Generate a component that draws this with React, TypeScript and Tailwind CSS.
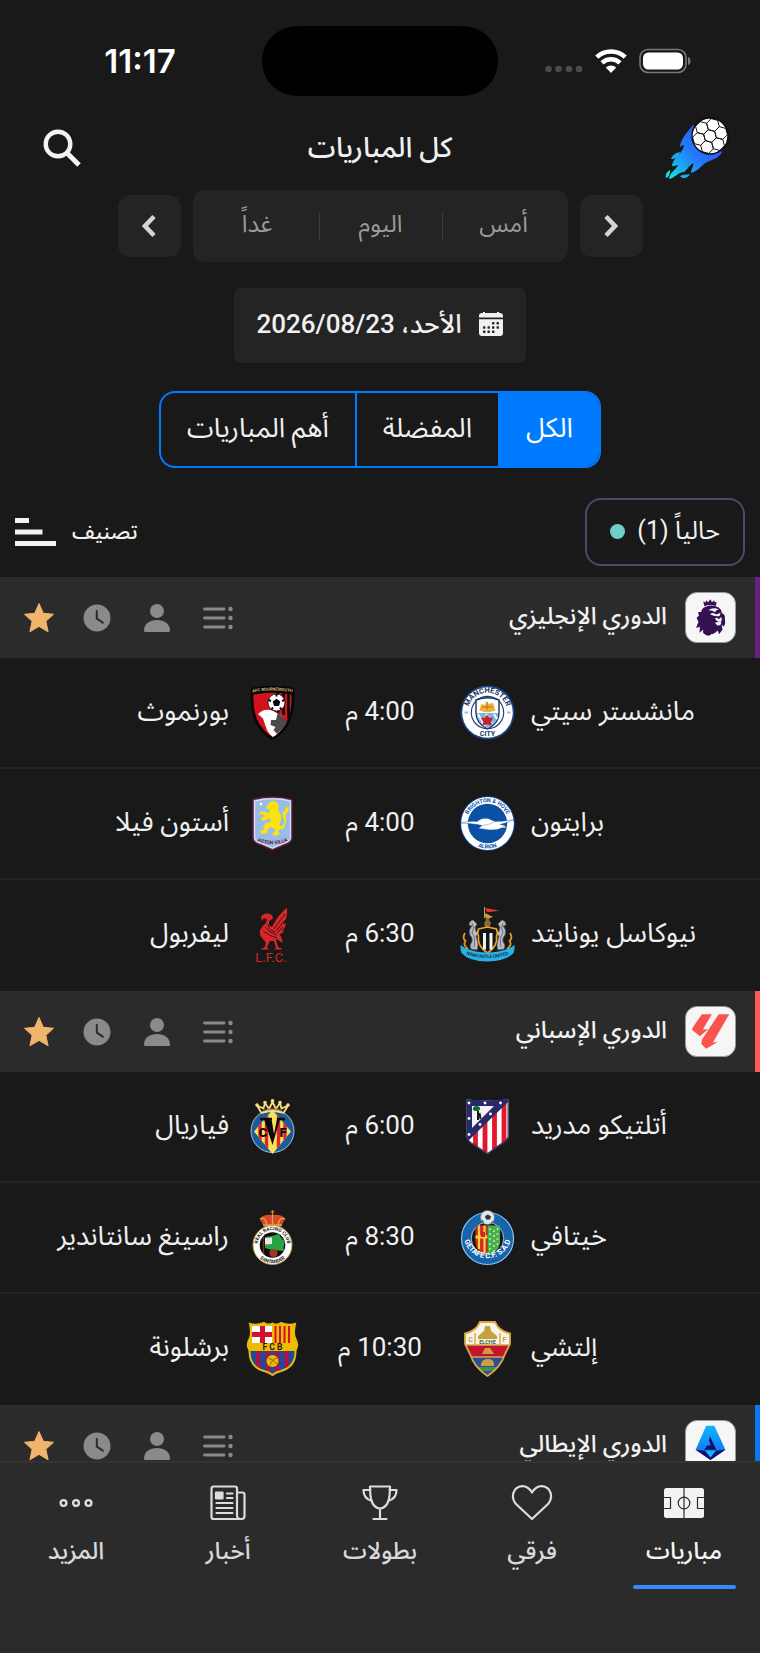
import React, { useState } from 'react';

type CrestProps = { className?: string };

interface Team {
    name: string;
    Crest: React.FC<CrestProps>;
}

interface Match {
    home: Team;
    away: Team;
    time: string;
}

interface League {
    id: string;
    name: string;
    stripe: string;
    Badge: React.FC;
    matches: Match[];
}

// crest lettering is Latin, so the drawings opt out of the page's rtl
const CREST = 'w-[55px] h-[55px] shrink-0 overflow-visible [direction:ltr]';
const INK = 'Roboto, sans-serif';

/* ---------- status bar + header drawings ---------- */

const hexagon = (cx: number, cy: number, r: number, turn: number) =>
    Array.from({ length: 6 }, (_, i) => {
        const a = ((i * 60 + turn) * Math.PI) / 180;
        return `${(cx + r * Math.cos(a)).toFixed(2)},${(cy + r * Math.sin(a)).toFixed(2)}`;
    }).join(' ');

const AppLogo = () => (
    <svg viewBox="0 0 64 64" className="w-16 h-16" aria-hidden="true">
        <defs>
            <linearGradient id="flame" x1="50" y1="20" x2="4" y2="62" gradientUnits="userSpaceOnUse">
                <stop offset="0" stopColor="#2a55f5" />
                <stop offset=".45" stopColor="#2478fb" />
                <stop offset=".75" stopColor="#19aef0" />
                <stop offset="1" stopColor="#12e6dc" />
            </linearGradient>
            <clipPath id="ball"><circle cx="45" cy="20" r="18" /></clipPath>
        </defs>
        <path
            fill="url(#flame)"
            d="M28 9C22 17 16 22 15 31C18 29 19 28 19 30C17 38 9 41 7 49C8 52 10 49 13 49C11 54 5 56 4 63C10 62 13 56 19 56C21 55 23 51 28 47C29 50 26 53 26 57C34 55 36 49 42 46C49 43 54 42 57 36L45 20Z"
        />
        <path fill="#1badf0" d="M15 36C10 37 8 39 6 43C11 43 14 41 15 36ZM25 58C22 59 19 58 15 60C18 64 23 62 25 58Z" />
        <path fill="#12e6dc" d="M5 54C2 56 0 58 1 62C4 61 5 58 5 54Z" />
        <circle cx="45" cy="20" r="18" fill="#fff" />
        <g clipPath="url(#ball)" fill="none" stroke="#161616" strokeWidth="1">
            <polygon points={hexagon(45, 20, 6.6, 15)} />
            {[0, 1, 2, 3, 4, 5].map(i => {
                const a = ((i * 60 + 45) * Math.PI) / 180;
                return <polygon key={i} points={hexagon(45 + 11.4 * Math.cos(a), 20 + 11.4 * Math.sin(a), 6.6, 15)} />;
            })}
        </g>
        <circle cx="45" cy="20" r="18" fill="none" stroke="#0b0b12" strokeWidth="1.4" />
    </svg>
);

const StatusBar = () => (
    <div dir="ltr" className="grid grid-cols-[1fr_236px_1fr] items-center pt-[26px] text-white">
        <span className="justify-self-center pl-[18px] font-[Inter,sans-serif] text-[33px] leading-none font-semibold">11:17</span>
        <span className="h-[70px] rounded-[35px] bg-black" />
        <span className="flex items-center gap-3 pl-[47px]">
            <svg viewBox="0 0 38 26" className="w-[38px] h-[26px]" fill="#4b4b4b" aria-hidden="true">
                <circle cx="3.5" cy="21" r="3.3" /><circle cx="13.5" cy="21" r="3.3" />
                <circle cx="24" cy="21" r="3.3" /><circle cx="34" cy="21" r="3.3" />
            </svg>
            <svg viewBox="0 0 32 26" className="w-8 h-[26px]" fill="none" stroke="#fff" strokeWidth="4.6" aria-hidden="true">
                <path d="M1.8 9.2A20.5 20.5 0 0 1 30.2 9.2" />
                <path d="M7 14.8A13 13 0 0 1 25 14.8" />
                <path d="M16 25L10.8 19.6A7.6 7.6 0 0 1 21.2 19.6Z" fill="#fff" stroke="none" />
            </svg>
            <svg viewBox="0 0 52 26" className="w-[52px] h-[26px]" aria-hidden="true">
                <rect x="1" y="1.5" width="46" height="23" rx="8" fill="none" stroke="#777" strokeWidth="1.6" />
                <rect x="4" y="4.5" width="40" height="17" rx="5.5" fill="#fff" />
                <path d="M49 9C52.5 10 52.5 16 49 17Z" fill="#777" />
            </svg>
        </span>
    </div>
);

const Chevron = ({ d }: { d: string }) => (
    <svg viewBox="0 0 16 24" className="w-4 h-6" fill="none" stroke="#d6d6d6" strokeWidth="4.6" aria-hidden="true">
        <path d={d} />
    </svg>
);

const CalendarIcon = () => (
    <svg viewBox="0 0 26 26" className="w-[26px] h-[26px]" aria-hidden="true">
        <path fill="#f0f0f0" d="M1 6.5V5a3 3 0 0 1 3-3h1V1h2v1h12V1h2v1h1a3 3 0 0 1 3 3v1.5ZM1 8.2h24V22a3 3 0 0 1-3 3H4a3 3 0 0 1-3-3Z" />
        <g fill="#242424">
            {[[14, 11], [18.5, 11], [5, 15.3], [9.5, 15.3], [14, 15.3], [18.5, 15.3], [5, 19.6], [9.5, 19.6], [14, 19.6]].map(([x, y]) => (
                <rect key={`${x}-${y}`} x={x} y={y} width="2.4" height="2.4" rx=".6" />
            ))}
        </g>
    </svg>
);

/* ---------- league header icons ---------- */

const ListIcon = () => (
    <svg viewBox="0 0 30 24" className="w-[30px] h-6" aria-hidden="true">
        <path d="M1.5 3H21M1.5 12H21M1.5 21H21" stroke="#8a8a8a" strokeWidth="2.8" strokeLinecap="round" />
        <g fill="#8a8a8a"><circle cx="27.5" cy="3" r="2.2" /><circle cx="27.5" cy="12" r="2.2" /><circle cx="27.5" cy="21" r="2.2" /></g>
    </svg>
);

const PersonIcon = () => (
    <svg viewBox="0 0 28 30" className="w-7 h-[30px]" fill="#8a8a8a" aria-hidden="true">
        <circle cx="14" cy="8" r="7" />
        <path d="M1 27.5C1 20.5 7 17 14 17S27 20.5 27 27.5Q27 29 25.5 29H2.5Q1 29 1 27.5Z" />
    </svg>
);

const ClockIcon = () => (
    <svg viewBox="0 0 28 28" className="w-7 h-7" aria-hidden="true">
        <circle cx="14" cy="14" r="13.5" fill="#8a8a8a" />
        <path d="M13.8 7V14.6L19.8 18.6" fill="none" stroke="#2b2b2b" strokeWidth="2" strokeLinecap="round" strokeLinejoin="round" />
    </svg>
);

const StarIcon = () => (
    <svg viewBox="0 0 32 32" className="w-8 h-8" aria-hidden="true">
        <path fill="#f0b46c" stroke="#f0b46c" strokeWidth="1" strokeLinejoin="round" d="M16 1.5L20.3 11.3L30.5 12.3L22.9 19.3L25.1 29.8L16 24.4L6.9 29.8L9.1 19.3L1.5 12.3L11.7 11.3Z" />
    </svg>
);

const PremierLeagueBadge = () => (
    <svg viewBox="0 0 51 51" className="w-full h-full" aria-hidden="true">
        <g fill="#351052">
            <path d="M18 8.5L20.5 10L21 7.5L23 9.5L25.5 6.5L27 9.5L29.5 7.5L29.7 10L32 9L31 13.5Q25 11.5 19 13.8Z" />
            <path d="M20 14.5Q27 11.5 34 15Q37 17 37.5 21Q41 22 40.5 27Q41.5 31 39.5 35L37 33L38 38L34.5 43L33 39Q29 43 27 42.5Q24 46 19.5 43Q17 42 18 38L14 41.5L14.5 35L10.5 36.5L13 30L11 26L13.5 23.5L12.5 20L16 19.5Q16 16 20 14.5Z" />
        </g>
        <g fill="#f6f6f6">
            <path d="M23 18Q28 14.5 34 17Q31 18 30 20Q27 17.5 23 18ZM25 22Q28 19.5 31.5 22.5L36 20.5L35 24Q30 25 25 22Z" />
            <path d="M30 26.5Q33 24.5 34 27.5L36.5 25Q38 28 37 29L34 30L32 29ZM30 31L37 29.5L36 33L33 34Z" />
        </g>
    </svg>
);

const LaLigaBadge = () => (
    <svg viewBox="0 0 51 51" className="w-full h-full" fill="#fb534e" aria-hidden="true">
        <path d="M16.5 7.5H27L17.5 23.5L23 23.2L14.5 30.5L6.5 24Q6 22.5 7.5 20.5Z" />
        <path d="M34 7.5H45L28 37L33 36.3L21 43.5L16 38.5L16.5 34Z" />
    </svg>
);

const SerieABadge = () => (
    <svg viewBox="0 0 51 51" className="w-full h-full" aria-hidden="true">
        <defs>
            <linearGradient id="serie" x1="0" y1="0" x2="0" y2="1"><stop stopColor="#12b6fb" /><stop offset="1" stopColor="#0a66f5" /></linearGradient>
        </defs>
        <path fill="url(#serie)" d="M21 5H29.5L41 30L25.5 40.5L10 30Z" />
        <path fill="#15106b" d="M10 30L25.5 40.5L41 30L30 31L25.5 38L20 31Z" />
        <path fill="#12b6fb" d="M20 31H31L25.5 38Z" />
        <path fill="#15106b" d="M25 16L31.5 30H19L22 25.5H25.5L24 20Z" />
    </svg>
);

/* ---------- club crests, all on a 55 unit square ---------- */

const ManCity: React.FC<CrestProps> = ({ className }) => (
    <svg viewBox="0 0 55 55" className={className} aria-hidden="true">
        <circle cx="27.5" cy="27.5" r="27" fill="#1b4484" />
        <circle cx="27.5" cy="27.5" r="25.3" fill="#fff" />
        <circle cx="27.5" cy="27.5" r="16.8" fill="#1b4484" />
        <circle cx="27.5" cy="27.5" r="15.6" fill="#fff" />
        <path d="M16 15Q27.5 10.5 39 15V28Q39 38 27.5 44Q16 38 16 28Z" fill="#fff" stroke="#1b3160" strokeWidth="1.4" />
        <path d="M16.7 28H38.3Q38 37.5 27.5 43.2Q17 37.5 16.7 28Z" fill="#79b7e5" />
        <path d="M18 29L25 41M26 29L32 39M34 29L37 34" stroke="#fff" strokeWidth="1.8" />
        <path d="M19.5 25.5L21 19L25 20L26.5 16L29 19L33 17.5L35.5 25.5Q27 29 19.5 25.5Z" fill="#f0b13c" />
        <path d="M22 22H33M27 17V25" stroke="#9c6a1c" strokeWidth=".8" />
        <path d="M27 31L29 33.5L32 33.5L30.5 36.5L31 39.5L27 38.5L23.5 39.5L24 36.5L22 33.5L25.5 33.5Z" fill="#c8202f" stroke="#c8202f" strokeWidth="1.4" />
        <path id="mc-top" d="M7.8 27.5A19.7 19.7 0 0 1 47.2 27.5" fill="none" />
        <text fontFamily={INK} fontSize="7.5" fontWeight="700" fill="#1b3160" textAnchor="middle"><textPath href="#mc-top" startOffset="50%">MANCHESTER</textPath></text>
        <text x="27.5" y="50.8" fontFamily={INK} fontSize="7" fontWeight="700" fill="#1b3160" textAnchor="middle">CITY</text>
        <path d="M4.5 27.5h3.5M47 27.5h3.5" stroke="#8fbfe8" strokeWidth="2" />
    </svg>
);

const Brighton: React.FC<CrestProps> = ({ className }) => (
    <svg viewBox="0 0 55 55" className={className} aria-hidden="true">
        <circle cx="27.5" cy="27.5" r="27.3" fill="#0a50a4" />
        <circle cx="27.5" cy="27.5" r="26.4" fill="#fff" />
        <circle cx="27.5" cy="27.5" r="19.7" fill="#0a50a4" />
        <path d="M1 27Q10 24.5 17 25.5Q22 21 28 22.5L35 25.5Q44 25.5 54 23.5Q47 27 40 28.5Q45 28.5 46 31.5Q41 31.5 37.5 33.5Q30 34.5 23 33L18.5 32.5L22 29.5Q14 27.5 1 27Z" fill="#fff" stroke="#0a50a4" strokeWidth=".4" />
        <path d="M22 29.5Q29 29 35 25.8" fill="none" stroke="#a9bdd6" strokeWidth=".8" />
        <path d="M43 30.2L47.5 31.8L43 31.9Z" fill="#f0a63c" />
        <path id="br-top" d="M6.2 27.5A21.3 21.3 0 0 1 48.8 27.5" fill="none" />
        <path id="br-bottom" d="M2.5 27.5A25 25 0 0 0 52.5 27.5" fill="none" />
        <text fontFamily={INK} fontSize="5.5" fontWeight="700" fill="#0a50a4" textAnchor="middle"><textPath href="#br-top" startOffset="50%">BRIGHTON &amp; HOVE</textPath></text>
        <text fontFamily={INK} fontSize="5.5" fontWeight="700" fill="#0a50a4" textAnchor="middle"><textPath href="#br-bottom" startOffset="50%">ALBION</textPath></text>
    </svg>
);

const Newcastle: React.FC<CrestProps> = ({ className }) => (
    <svg viewBox="0 0 55 55" className={className} aria-hidden="true">
        <path d="M24.5 0V11" stroke="#c9a45a" strokeWidth="1" />
        <path d="M25 1L39 3.5L34 4.5L27 5Z" fill="#e2382f" />
        <path d="M25 10L27 8L30 10L29 13L31 16L29.5 20H25L24 16L26 13Z" fill="#8a6b3a" />
        <path d="M25.5 6L29 8L33 10L30 11L27 11L25 9Z" fill="#dd9a2b" />
        <g fill="#b9bcc4" stroke="#5d616b" strokeWidth=".7">
            <path id="nu-horse" d="M13 13Q9 14 9 18L12 19Q8 23 10 28Q13 31 12 35Q9 38 11 42L17 43Q19 38 17 33L16 29L21 24L20 22L16 25L15 20L17 17Z" />
            <use href="#nu-horse" transform="matrix(-1 0 0 1 55 0)" />
        </g>
        <path d="M12 16Q15 21 12 26Q16 30 14 40M43 16Q40 21 43 26Q39 30 41 40" fill="none" stroke="#6c7079" strokeWidth="1" />
        <path d="M5 26Q2 31 5.5 34Q2.5 38 8 42M50 26Q53 31 49.5 34Q52.5 38 47 42" fill="none" stroke="#dd9a2b" strokeWidth="1.8" />
        <path d="M18.5 22L27.5 20L36.5 22Q38 26 36.5 29Q38 39 27.5 46Q17 39 18.5 29Q17 26 18.5 22Z" fill="#141414" stroke="#e8a72c" strokeWidth="1.6" />
        <path d="M24.5 26V42.5M31 26V42.5" stroke="#f2f2f2" strokeWidth="3" />
        <path d="M.5 38L5 41Q27 50 50 41L54.5 38Q55 42 53.5 46Q46 54.5 27.5 54.5T1.5 46Q0 42 .5 38Z" fill="#29b0e4" />
        <path id="nu-scroll" d="M6 47.5Q27.5 54.5 49 47.5" fill="none" />
        <text fontFamily={INK} fontSize="4.5" fontWeight="700" fill="#0f3350" textAnchor="middle"><textPath href="#nu-scroll" startOffset="50%">NEWCASTLE UNITED</textPath></text>
    </svg>
);

const Bournemouth: React.FC<CrestProps> = ({ className }) => (
    <svg viewBox="0 0 55 55" className={className} aria-hidden="true">
        <path d="M6 3Q27.5-1.5 49 3Q51 28 42 42Q35 52 27.5 55Q20 52 13 42Q4 28 6 3Z" fill="#060606" />
        <path d="M8.5 9.5Q27.5 6 46.5 9.5Q47.5 27 40 40Q34 48.5 27.5 52Q21 48.5 15 40Q7.5 27 8.5 9.5Z" fill="#d3131b" />
        <path d="M33 8V32M38.5 8V30M43.5 9V34" stroke="#0a0a0a" strokeWidth="2.6" />
        <path d="M13 29Q19 23 27 25.5L36 30L41 38Q35 48 28 52Q24 49 22.5 46Q20 40 18 33.5Z" fill="#fff" />
        <path d="M33 27L42 37Q38 44 32 49L28.5 45L30.5 42L25.5 40L26 35L31 35Z" fill="#4a4a4a" />
        <circle cx="31.5" cy="17.5" r="8.5" fill="#fff" stroke="#111" strokeWidth=".8" />
        <path d="M31.5 13.7L35.3 16.5L34 21H29L27.7 16.5Z" fill="#0a0a0a" />
        <path d="M31.5 9v2.5M39.5 15l-2.5 1M36.5 24.5l-1.5-2M26.5 24.5l1.5-2M23.5 15l2.5 1" stroke="#0a0a0a" strokeWidth="2" />
        <path id="bm-top" d="M7 7.5Q27.5 3.5 48 7.5" fill="none" />
        <text fontFamily={INK} fontSize="4.2" fontWeight="700" fill="#d8b978" textAnchor="middle"><textPath href="#bm-top" startOffset="50%">AFC BOURNEMOUTH</textPath></text>
    </svg>
);

const AstonVilla: React.FC<CrestProps> = ({ className }) => (
    <svg viewBox="0 0 55 55" className={className} aria-hidden="true">
        <path d="M8 3.500Q27.5-1.5 47 3.5V43Q46 47 39 49L27.5 54L16 49Q9 47 8 43Z" fill="#98bce7" stroke="#6d1238" strokeWidth="1.4" />
        <path d="M9.7 5Q27.5.5 45.3 5V42.5Q44.5 45.8 38 47.6L27.5 52L17 47.6Q10.500 45.8 9.7 42.5Z" fill="none" stroke="#dceafa" strokeWidth="1" />
        <g fill="#fbe30b">
            <path d="M24 7Q27 3.5 31 6Q35 9 33 14L36 19Q37 24 34 28L37 32L33 35L35 38L30 40L27 38L31 34L26 31L22 34L23 37L17 38L15 35L20 33L18 31L21 27L26 26L25 22L19 25L15 23L20 20L17 18L14 19L16 15L24 17L25 13L21 13L22 10Z" />
            <path d="M36 31Q41 27 38 21Q36 15 41 14L39 10L42 12L43 9L44 13Q42 18 40.5 19Q43 28 37 34Z" />
        </g>
        <circle cx="16" cy="8" r="1.3" fill="#fff" />
        <path id="av-name" d="M11 44.5Q27.5 52 44 44.5" fill="none" />
        <text fontFamily={INK} fontSize="5" fontWeight="700" fill="#6d1238" textAnchor="middle"><textPath href="#av-name" startOffset="50%">ASTON VILLA</textPath></text>
    </svg>
);

const Liverpool: React.FC<CrestProps> = ({ className }) => (
    <svg viewBox="0 0 55 55" className={className} fill="#dc2527" aria-hidden="true">
        <path d="M16 10Q18 6 23 6.5L27 8L28 12L25 13Q22 18 27 20L31 13Q34 8 42 .5Q43 11 38 17Q41 16 41 17Q40 22 37 23L39 24Q36 28 34 27Q38 31 37 36Q33 32 31 32L32 37L34 41H37L36 42.5H29L31 41L29 34L25 34L23 38L22 41L24 42.5H15L20 40L21 36L19 33Q14 29 15 24Q16 20 21 16L22 12L19 11L17 14Z" />
        <path d="M29 22L40 7M31 24L40 13M32 26L38 20M18 24Q24 29 32 31M20 20Q24 26 32 28M23 17Q23 23 30 25" fill="none" stroke="#191919" strokeWidth=".9" />
        <text x="26" y="54.5" fontFamily={INK} fontSize="13" textAnchor="middle">L.F.C.</text>
    </svg>
);

const Atletico: React.FC<CrestProps> = ({ className }) => (
    <svg viewBox="0 0 55 55" className={className} aria-hidden="true">
        <defs><clipPath id="am-body"><path d="M6.5.5Q27.5 2.5 48.5.5V38Q47 42 40 46L27.5 55L14 46Q7 42 6.5 38Z" /></clipPath></defs>
        <g clipPath="url(#am-body)">
            <path d="M0 0H55V55H0Z" fill="#fff" />
            <path d="M15.5 0V55M25 0V55M34.5 0V55M44 0V55" stroke="#e4182a" strokeWidth="4.8" />
            <path d="M0 0H51L8 42L0 40Z" fill="#28296b" />
            <path d="M12 7H34L12 29Z" fill="#f4f4f4" />
            <path d="M18 12V21M19.5 14L20.5 20" stroke="#191919" strokeWidth="2" />
            <ellipse cx="16.5" cy="9.5" rx="3.6" ry="2.6" fill="#13693b" />
            <path d="M6.5.5Q27.5 2.5 48.5.5V38Q47 42 40 46L27.5 55L14 46Q7 42 6.5 38Z" fill="none" stroke="#28296b" strokeWidth="2" />
        </g>
        <g fill="#fff"><circle cx="9" cy="4" r="1.4" /><circle cx="25" cy="4" r="1.4" /><circle cx="40.5" cy="4" r="1.4" /><circle cx="9" cy="19.5" r="1.4" /><circle cx="9" cy="35.5" r="1.4" /><circle cx="20" cy="25.5" r="1.4" /><circle cx="30.5" cy="15" r="1.4" /></g>
    </svg>
);

const Getafe: React.FC<CrestProps> = ({ className }) => (
    <svg viewBox="0 0 55 55" className={className} aria-hidden="true">
        <circle cx="27.5" cy="28.5" r="26" fill="#1565ae" stroke="#8fc4ec" strokeWidth="1.2" />
        <circle cx="27.5" cy="28.5" r="16.3" fill="#191919" stroke="#cfe3f5" strokeWidth=".8" />
        <path d="M15.5 15.5H27.5V45Q17 43 15.5 33Z" fill="#d5262e" />
        <path d="M19 15.5V39M24.5 15.5V43.5" stroke="#f7d530" strokeWidth="2.2" />
        <path d="M15.5 27H27.5" stroke="#f7d530" strokeWidth="3" />
        <path d="M21 22h4v5h-4z" fill="#d5262e" />
        <path d="M27.5 15.5H40V33Q38 43 27.5 45Z" fill="#46b14c" />
        <g fill="#bfe5b6">
            {[19, 24, 29, 34, 39].map(y => (
                <g key={y}><circle cx="30" cy={y} r="1" /><circle cx="34" cy={y + 2} r="1" />{y < 36 && <circle cx="37.5" cy={y} r="1" />}</g>
            ))}
        </g>
        <circle cx="27.5" cy="7.5" r="7" fill="#dfe6ec" stroke="#6a7580" strokeWidth=".6" />
        <path d="M25 6L28 4.5L31 6.5L30 9.5L26 9.5ZM21.5 9L24 12L23 13ZM33 11L30 13.5L33 12Z" fill="#2c3640" />
        <path id="gf-name" d="M3.6 26.5A24 24 0 0 0 51.4 26.5" fill="none" />
        <text fontFamily={INK} fontSize="7.5" fontWeight="700" fill="#fff" textAnchor="middle"><textPath href="#gf-name" startOffset="50%">GETAFE C.F. S.A.D</textPath></text>
    </svg>
);

const Elche: React.FC<CrestProps> = ({ className }) => (
    <svg viewBox="0 0 55 55" className={className} aria-hidden="true">
        <defs><clipPath id="el-body"><path d="M20 1H35L38 6Q43 11 50 12.5V23L45 33Q41 46 27.5 55Q14 46 10 33L5 23V12.5Q12 11 17 6Z" /></clipPath></defs>
        <g clipPath="url(#el-body)">
            <path d="M0 0H55V24H0Z" fill="#f7f3e6" />
            <path d="M0 24H55V36H0Z" fill="#c31532" />
            <path d="M0 36H55V55H0Z" fill="#2b4f94" />
            <path d="M15 46H40V50H15Z" fill="#3f9150" />
            <path d="M0 24H55M0 36H55M15 12V24M40 12V24" stroke="#d8a744" strokeWidth="1.4" />
            <path d="M18 15L24 10L25 5H30L31 10L37 15V18H18ZM22 33L25 27H30L34 33ZM21 43Q22 38 28 38T34 43V45H21Z" fill="#c8a040" />
        </g>
        <path d="M20 1H35L38 6Q43 11 50 12.5V23L45 33Q41 46 27.5 55Q14 46 10 33L5 23V12.5Q12 11 17 6Z" fill="none" stroke="#d8a744" strokeWidth="1.8" />
        <g fontFamily={INK} fontWeight="700" textAnchor="middle">
            <text x="27.5" y="22.5" fontSize="5.5" fill="#3a6f3c">ELCHE</text>
            <text x="10.5" y="21" fontSize="7" fill="#c8a040">C</text>
            <text x="44.5" y="21" fontSize="7" fill="#c8a040">F</text>
        </g>
    </svg>
);

const Villarreal: React.FC<CrestProps> = ({ className }) => (
    <svg viewBox="0 0 55 55" className={className} aria-hidden="true">
        <defs><clipPath id="vr-body"><path d="M27.5 11L46 32.5L27.5 55L9 32.5Z" /></clipPath></defs>
        <circle cx="27.5" cy="32" r="21.5" fill="#1c5c96" stroke="#a7bfd5" strokeWidth="1" />
        <g clipPath="url(#vr-body)">
            <path d="M0 8H55V55H0Z" fill="#fbe15a" />
            <path d="M15 8V55M21.5 8V55M33.5 8V55M40 8V55" stroke="#e0222b" strokeWidth="3.4" />
        </g>
        <path d="M15 20H27M32 20H40" fill="none" stroke="#0b0b0b" strokeWidth="2.4" />
        <path d="M19 20H26.500L29 35L32 20H35L27.500 46Z" fill="#0b0b0b" />
        <g fontFamily={INK} fontWeight="900" fontSize="13" fill="#0b0b0b" textAnchor="middle">
            <text x="18" y="37.5">C</text>
            <text x="38" y="37.5">F</text>
        </g>
        <g fill="none" stroke="#f5e07a" strokeWidth="1.8" strokeLinejoin="round">
            <path d="M16.500 14L12 6.500L18.500 9.500L20 4L24 10L27.500 3L31 10L35 4L36.500 9.500L43 6.500L38.500 14Q27.500 10 16.500 14Z" />
        </g>
        <path d="M18 11.5Q27.5 8 37 11.5" fill="none" stroke="#b8542c" strokeWidth="1.2" />
        <g fill="#f5e07a"><circle cx="12" cy="6" r="1.8" /><circle cx="20" cy="3.5" r="1.8" /><circle cx="27.5" cy="2" r="1.9" /><circle cx="35" cy="3.5" r="1.8" /><circle cx="43" cy="6" r="1.8" /></g>
    </svg>
);

const Racing: React.FC<CrestProps> = ({ className }) => (
    <svg viewBox="0 0 55 55" className={className} aria-hidden="true">
        <path d="M27.5 0V6M25.5 2H29.5" stroke="#d98a2c" strokeWidth="1.2" />
        <path d="M15 9Q18 4 27.5 5Q37 4 40 9L36 17H19Z" fill="#d6452c" />
        <path d="M15 9Q21 6 22 16M40 9Q34 6 33 16M27.5 5V16M18 15H37" fill="none" stroke="#e0a33b" strokeWidth="1.4" />
        <circle cx="27.5" cy="35" r="19.5" fill="#fff" stroke="#c79a45" strokeWidth="1" />
        <circle cx="27.5" cy="35" r="12.8" fill="#140c08" />
        <path d="M20 27L27 26L34 24Q36 29 40 31Q38 37 39 41L27 40L20 38Z" fill="#2aa344" />
        <path d="M20 28L27 27.5V34L20 34.5Z" fill="#e9e9e9" />
        <path d="M18.5 27V44" stroke="#7a2b17" strokeWidth="1.4" />
        <circle cx="28.5" cy="43" r="4" fill="#9a3a1e" />
        <path id="rs-top" d="M12.7 35A14.8 14.8 0 0 1 42.3 35" fill="none" />
        <path id="rs-bottom" d="M9.2 35A18.3 18.3 0 0 0 45.8 35" fill="none" />
        <g fontFamily={INK} fontWeight="700" fontSize="4.8" fill="#161616" textAnchor="middle">
            <text><textPath href="#rs-top" startOffset="50%">REAL RACING CLUB</textPath></text>
            <text><textPath href="#rs-bottom" startOffset="50%">SANTANDER</textPath></text>
        </g>
    </svg>
);

const Barcelona: React.FC<CrestProps> = ({ className }) => (
    <svg viewBox="0 0 55 55" className={className} aria-hidden="true">
        <defs><clipPath id="fb-body"><path d="M5 3Q12 5 19 2Q23 5 27.5 2.5Q32 5 36 2Q43 5 50 3Q48 12 50 17Q53 22 52 29H50Q51 46 36 50Q31 51 27.5 54Q24 51 19 50Q4 46 5 29H3Q2 22 5 17Q7 12 5 3Z" /></clipPath></defs>
        <g clipPath="url(#fb-body)">
            <path d="M0 0H55V55H0Z" fill="#edbb00" />
            <path d="M7 5H27V22H7Z" fill="#fff" />
            <path d="M17.5 5V22M7 13.5H27" stroke="#d3112f" strokeWidth="5" />
            <path d="M30.5 5V22M35 5V22M39.5 5V22M44 5V22" stroke="#d3112f" strokeWidth="2" />
            <path d="M5 30H50V55H5Z" fill="#1d4b9b" />
            <path d="M13.5 30V55M23 30V55M32 30V55M41.5 30V55" stroke="#a8134c" strokeWidth="4.6" />
        </g>
        <path d="M5 3Q12 5 19 2Q23 5 27.5 2.5Q32 5 36 2Q43 5 50 3Q48 12 50 17Q53 22 52 25.5Q51 28 50.5 29Q51 46 36 50Q31 51 27.5 54Q24 51 19 50Q4 46 4.5 29Q4 28 3 25.5Q2 22 5 17Q7 12 5 3Z" fill="none" stroke="#e6bb0e" strokeWidth="2" />
        <circle cx="27.5" cy="40" r="6" fill="#edbb00" />
        <path d="M23 37Q28 38 32 43M25 44Q27 38 32 37" fill="none" stroke="#8a5a10" strokeWidth=".9" />
        <text x="27.5" y="29" fontFamily={INK} fontWeight="700" fontSize="8.5" fill="#1a1a1a" textAnchor="middle">F C B</text>
    </svg>
);

/* ---------- data ---------- */

const leagues: League[] = [
    {
        id: 'epl', name: 'الدوري الإنجليزي', stripe: 'border-[#6a1f86]', Badge: PremierLeagueBadge,
        matches: [
            { home: { name: 'مانشستر سيتي', Crest: ManCity }, away: { name: 'بورنموث', Crest: Bournemouth }, time: '4:00 م' },
            { home: { name: 'برايتون', Crest: Brighton }, away: { name: 'أستون فيلا', Crest: AstonVilla }, time: '4:00 م' },
            { home: { name: 'نيوكاسل يونايتد', Crest: Newcastle }, away: { name: 'ليفربول', Crest: Liverpool }, time: '6:30 م' },
        ],
    },
    {
        id: 'laliga', name: 'الدوري الإسباني', stripe: 'border-[#ff5a55]', Badge: LaLigaBadge,
        matches: [
            { home: { name: 'أتلتيكو مدريد', Crest: Atletico }, away: { name: 'فياريال', Crest: Villarreal }, time: '6:00 م' },
            { home: { name: 'خيتافي', Crest: Getafe }, away: { name: 'راسينغ سانتاندير', Crest: Racing }, time: '8:30 م' },
            { home: { name: 'إلتشي', Crest: Elche }, away: { name: 'برشلونة', Crest: Barcelona }, time: '10:30 م' },
        ],
    },
    { id: 'seriea', name: 'الدوري الإيطالي', stripe: 'border-[#0a78ec]', Badge: SerieABadge, matches: [] },
];

const days = ['أمس', 'اليوم', 'غداً'];
const filters = ['الكل', 'المفضلة', 'أهم المباريات'];

const tabs = [
    {
        label: 'مباريات',
        icon: (
            <svg viewBox="0 0 40 36" className="w-10 h-9" aria-hidden="true">
                <rect y="3" width="40" height="30" rx="2.5" fill="#f2f2f2" />
                <g fill="none" stroke="#2b2b2b" strokeWidth="1.2"><path d="M20 3V33M0 12.5H6.5V23.5H0M40 12.5H33.5V23.5H40" /><circle cx="20" cy="18" r="5.8" /></g>
            </svg>
        ),
    },
    {
        label: 'فرقي',
        icon: (
            <svg viewBox="0 0 42 36" className="w-[42px] h-9" fill="none" stroke="#dcdcdc" strokeWidth="2.2" strokeLinejoin="round" aria-hidden="true">
                <path d="M21 34L4.5 18.5C-.5 12 2 2 11 1.2C15.5 1 18.5 3.5 21 7.5C23.5 3.5 26.5 1 31 1.2C40 2 42.5 12 37.5 18.5Z" />
            </svg>
        ),
    },
    {
        label: 'بطولات',
        icon: (
            <svg viewBox="0 0 36 36" className="w-9 h-9" fill="none" stroke="#dcdcdc" strokeWidth="2.2" strokeLinecap="round" strokeLinejoin="round" aria-hidden="true">
                <path d="M8 1.5H28C28 12 27 22.5 18 23.5C9 22.5 8 12 8 1.5ZM8.5 5H1.5C1.5 10 4 14.5 10 16M27.5 5H34.5C34.5 10 32 14.5 26 16M18 23.5V34M11.5 34H24.5" />
            </svg>
        ),
    },
    {
        label: 'أخبار',
        icon: (
            <svg viewBox="0 0 36 36" className="w-9 h-9" fill="none" stroke="#dcdcdc" strokeWidth="2.2" strokeLinecap="round" strokeLinejoin="round" aria-hidden="true">
                <path d="M27 30V3.5Q27 1.5 25 1.5H3.5Q1.5 1.5 1.5 3.5V32Q1.5 34 3.5 34H31.5Q34.5 34 34.5 31V9.5Q34.5 7.5 32.5 7.5H27.5M27 30Q27 34 30.500 34" />
                <path d="M17 8.5H22.5M17 13H22.5M6.5 18H22.5M6.5 23H22.5M6.5 28H22.5" />
                <rect x="6" y="7.5" width="6.5" height="6" fill="#dcdcdc" />
            </svg>
        ),
    },
    {
        label: 'المزيد',
        icon: (
            <svg viewBox="0 0 34 36" className="w-[34px] h-9" fill="none" stroke="#dcdcdc" strokeWidth="2.4" aria-hidden="true">
                <circle cx="4.5" cy="18" r="2.9" /><circle cx="17" cy="18" r="2.9" /><circle cx="29.5" cy="18" r="2.9" />
            </svg>
        ),
    },
];

/* ---------- list ---------- */

const LeagueHeader = ({ league }: { league: League }) => (
    <header className={`flex items-center border-s-[5px] bg-[#2b2b2b] ps-[19px] pe-[23px] py-[15px] ${league.stripe}`}>
        <span className="h-[51px] w-[51px] shrink-0 rounded-xl border border-[#9a9a9a] bg-[#f6f6f6]">
            <league.Badge />
        </span>
        <h2 className="ms-[18px] flex-1 pb-1 text-[24px] leading-8 font-medium text-[#f2f2f2]">{league.name}</h2>
        <div className="flex items-center gap-8">
            <button type="button" aria-label="الترتيب"><ListIcon /></button>
            <button type="button" aria-label="الهدافون"><PersonIcon /></button>
            <button type="button" aria-label="المواعيد"><ClockIcon /></button>
            <button type="button" aria-label="المفضلة" className="-ms-1"><StarIcon /></button>
        </div>
    </header>
);

const MatchRow = ({ match }: { match: Match }) => (
    <li className="grid grid-cols-[minmax(0,1fr)_55px_160px_55px_minmax(0,1fr)] items-center border-b-2 border-[#232323] py-[27px] text-[27px] leading-8 text-[#f0f0f0] last:border-[#191919]">
        <span className="pe-4 pb-1 text-end whitespace-nowrap">{match.home.name}</span>
        <match.home.Crest className={CREST} />
        <time className="pb-1 text-center text-[26px]">{match.time}</time>
        <match.away.Crest className={CREST} />
        <span className="ps-4 pb-1 whitespace-nowrap">{match.away.name}</span>
    </li>
);

const App: React.FC = () => {
    const [filter, setFilter] = useState(filters[0]);
    const [tab, setTab] = useState(tabs[0].label);

    return (
        <div dir="rtl" className="flex h-screen flex-col overflow-hidden bg-[#191919] font-[Roboto,'Noto_Sans_Arabic','Noto_Sans',sans-serif] text-[#f0f0f0]">
            <StatusBar />

            <div className="mt-5 grid grid-cols-[1fr_auto_1fr] items-center px-[31px]">
                <AppLogo />
                <h1 className="text-[28px] leading-9 font-medium">كل المباريات</h1>
                <button type="button" aria-label="بحث" className="me-3 justify-self-end">
                    <svg viewBox="0 0 38 38" className="w-[38px] h-[38px]" fill="none" stroke="#f4f4f4" aria-hidden="true">
                        <circle cx="15" cy="15" r="12.3" strokeWidth="4.4" />
                        <path d="M24 24L36 36" strokeWidth="5" />
                    </svg>
                </button>
            </div>

            <div className="mt-2.5 flex items-center justify-center gap-3">
                <button type="button" aria-label="اليوم السابق" className="flex h-[62px] w-[63px] items-center justify-center rounded-xl bg-[#242424]">
                    <Chevron d="M3 2.5L12 12L3 21.5" />
                </button>
                <div className="grid w-[375px] grid-cols-3 divide-x divide-[#3a3a3a] rounded-xl bg-[#242424] px-[3px] py-[22px]">
                    {days.map(d => (
                        <button key={d} type="button" className="h-7 pb-1 text-[24px] leading-6 text-[#9a9a9a]">{d}</button>
                    ))}
                </div>
                <button type="button" aria-label="اليوم التالي" className="flex h-[62px] w-[63px] items-center justify-center rounded-xl bg-[#242424]">
                    <Chevron d="M13 2.5L4 12L13 21.5" />
                </button>
            </div>

            <button type="button" className="mt-[26px] flex items-center gap-4 self-center rounded-lg bg-[#242424] px-[22px] pt-[18px] pb-[21px] text-[26px] leading-9 font-medium">
                <CalendarIcon />
                الأحد، 2026/08/23
            </button>

            <div className="mt-7 flex self-center overflow-hidden rounded-2xl border-2 border-[#007aff]">
                {filters.map(f => (
                    <button
                        key={f}
                        type="button"
                        aria-pressed={f === filter}
                        onClick={() => setFilter(f)}
                        className={`border-s-2 border-[#007aff] px-[26px] pt-[17px] pb-5 text-[27px] leading-9 first:border-s-0 ${f === filter ? 'bg-[#007aff] text-white' : ''}`}
                    >
                        {f}
                    </button>
                ))}
            </div>

            <div className="mt-[30px] mb-[11px] flex items-center justify-between px-[15px]">
                <button type="button" className="flex items-center gap-3 rounded-2xl border-2 border-[#4a4a68] px-[23px] pt-[15px] pb-[17px] text-[25px] leading-8">
                    حالياً (1)
                    <span className="h-[15px] w-[15px] rounded-full bg-[#6fd0c6]" />
                </button>
                <button type="button" className="flex items-center gap-4 text-[21px] leading-8 font-medium">
                    تصنيف
                    <svg viewBox="0 0 41 28" className="w-[41px] h-7" fill="#f2f2f2" aria-hidden="true">
                        <path d="M0 0H14V5H0ZM0 11.5H27.5V16.5H0ZM0 23H41V28H0Z" />
                    </svg>
                </button>
            </div>

            <main className="min-h-0 flex-1 overflow-y-auto [scrollbar-width:none]">
                {leagues.map(league => (
                    <section key={league.id}>
                        <LeagueHeader league={league} />
                        <ul>
                            {league.matches.map(m => <MatchRow key={m.home.name} match={m} />)}
                        </ul>
                    </section>
                ))}
            </main>

            <nav className="grid shrink-0 grid-cols-5 border-t-2 border-[#333] bg-[#2b2b2b] pb-16">
                {tabs.map(t => (
                    <button key={t.label} type="button" onClick={() => setTab(t.label)} className="flex flex-col items-center pt-[22px]">
                        {t.icon}
                        <span className={`mt-3 text-[24px] leading-9 font-medium ${t.label === tab ? 'text-[#f4f4f4]' : 'text-[#d8d8d8]'}`}>{t.label}</span>
                        <span className={`mt-4 h-1 w-[103px] rounded-full ${t.label === tab ? 'bg-[#338bff]' : ''}`} />
                    </button>
                ))}
            </nav>
        </div>
    );
};

export default App;
